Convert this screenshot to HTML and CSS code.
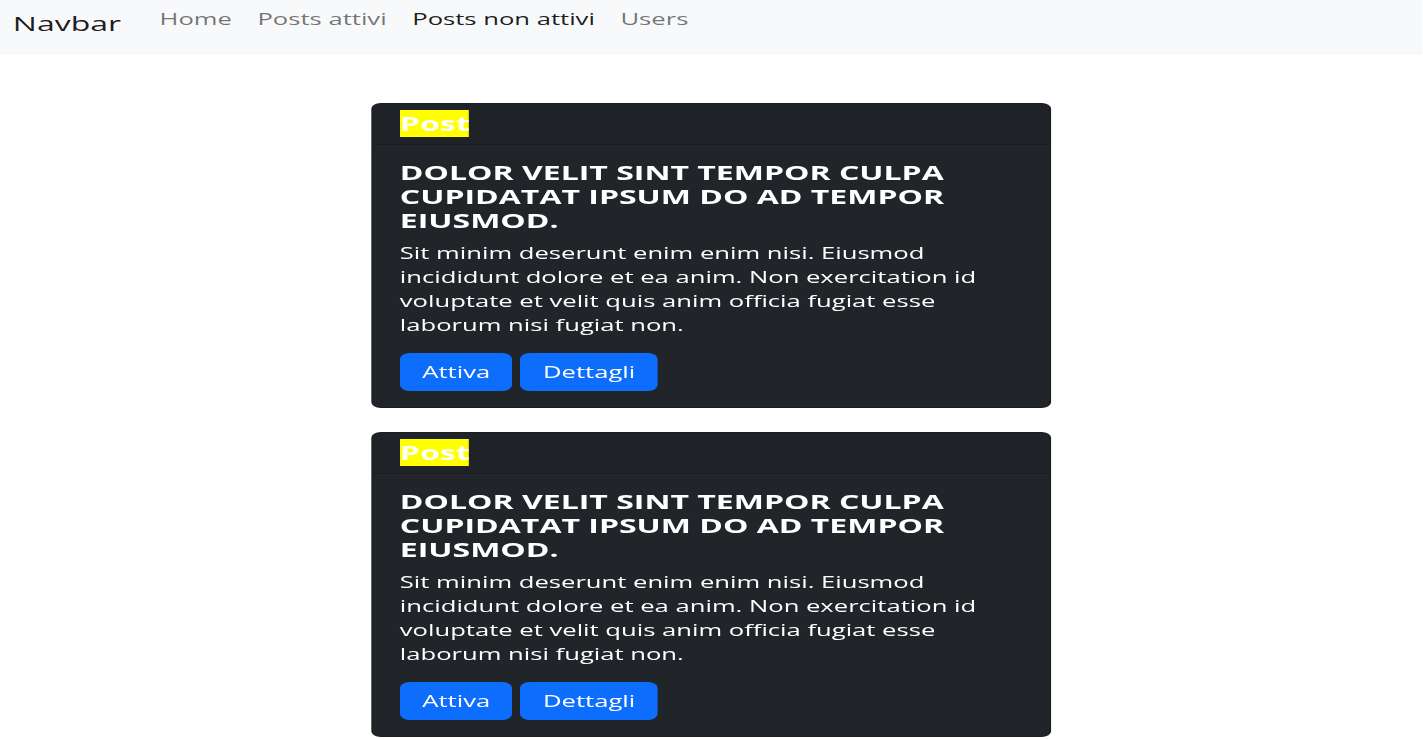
FILE: index.html
```html
<!DOCTYPE html>
<html lang="it">
<head>
<meta charset="utf-8">
<title>Posts non attivi</title>
<link rel="stylesheet" href="styles.css">
</head>
<body>
<div class="page">
  <nav class="navbar">
    <a class="brand" href="#">Navbar</a>
    <ul class="nav">
      <li><a class="nav-link" href="#">Home</a></li>
      <li><a class="nav-link" href="#">Posts attivi</a></li>
      <li><a class="nav-link active" href="#">Posts non attivi</a></li>
      <li><a class="nav-link" href="#">Users</a></li>
    </ul>
  </nav>

  <main class="list">
    <div class="card">
      <div class="card-header"><span class="tag">Post</span></div>
      <div class="card-body">
        <h5 class="card-title">Dolor velit sint tempor culpa cupidatat ipsum do ad tempor eiusmod.</h5>
        <p class="card-text">Sit minim deserunt enim enim nisi. Eiusmod incididunt dolore et ea anim. Non exercitation id voluptate et velit quis anim officia fugiat esse laborum nisi fugiat non.</p>
        <div class="actions">
          <button class="btn">Attiva</button>
          <button class="btn">Dettagli</button>
        </div>
      </div>
    </div>

    <div class="card">
      <div class="card-header"><span class="tag">Post</span></div>
      <div class="card-body">
        <h5 class="card-title">Dolor velit sint tempor culpa cupidatat ipsum do ad tempor eiusmod.</h5>
        <p class="card-text">Sit minim deserunt enim enim nisi. Eiusmod incididunt dolore et ea anim. Non exercitation id voluptate et velit quis anim officia fugiat esse laborum nisi fugiat non.</p>
        <div class="actions">
          <button class="btn">Attiva</button>
          <button class="btn">Dettagli</button>
        </div>
      </div>
    </div>
  </main>
</div>
</body>
</html>
```

FILE: styles.css
```css
html {
  overflow: hidden;
}

body {
  margin: 0;
  background: #ffffff;
  font-family: "Open Sans", "Noto Sans", sans-serif;
  font-size: 16px;
  line-height: 24px;
  color: #212529;
}

.page {
  width: 889.375px;
  transform: scaleX(1.6);
  transform-origin: 0 0;
}

.navbar {
  height: 55px;
  background: #f8f9fa;
  display: flex;
  align-items: flex-start;
  padding: 0 8px;
  box-sizing: border-box;
}

.brand {
  margin-top: 9px;
  font-size: 20px;
  line-height: 30px;
  color: rgba(0, 0, 0, 0.9);
  text-decoration: none;
  margin-right: 16px;
}

.nav {
  list-style: none;
  margin: 0;
  padding: 0;
  display: flex;
}

.nav-link {
  display: block;
  padding: 7px 8px;
  color: rgba(0, 0, 0, 0.55);
  text-decoration: none;
}

.nav-link.active {
  color: rgba(0, 0, 0, 0.9);
}

.list {
  width: 424.8px;
  margin: 48px 0 0 231.9px;
  display: flex;
  flex-direction: column;
  gap: 24px;
}

.card {
  background: #212529;
  border: 1px solid rgba(0, 0, 0, 0.175);
  border-radius: 6px;
  color: #ffffff;
  overflow: hidden;
}

.card-header {
  padding: 8px 17px;
  background: rgba(0, 0, 0, 0.03);
  border-bottom: 1px solid rgba(0, 0, 0, 0.175);
  font-size: 20px;
  line-height: 24px;
  font-weight: 700;
}

.tag {
  background: #ffff00;
  color: #ffffff;
}

.card-body {
  padding: 16px 17px;
}

.card-title {
  margin: 0 0 8px;
  font-size: 20px;
  line-height: 24px;
  font-weight: 700;
  text-transform: uppercase;
}

.card-text {
  margin: 0 0 16px;
}

.actions {
  display: flex;
  gap: 5px;
}

.btn {
  font-family: inherit;
  font-size: 16px;
  line-height: 24px;
  padding: 6px 13px;
  border: 1px solid #0d6efd;
  border-radius: 6px;
  background: #0d6efd;
  color: #ffffff;
  cursor: pointer;
}
```
